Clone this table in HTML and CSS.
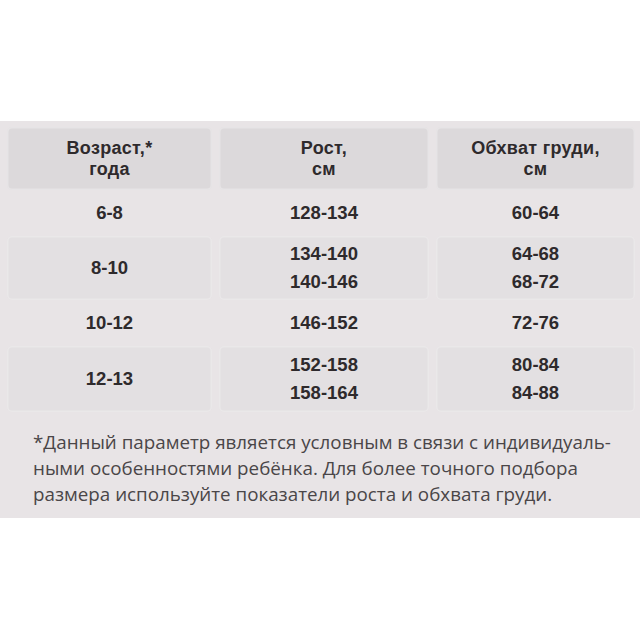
FILE: index.html
```html
<!DOCTYPE html>
<html lang="ru">
<head>
<meta charset="utf-8">
<link rel="stylesheet" href="styles.css">
</head>
<body>
<div class="top"></div>
<div class="card">
  <div class="table">
    <div class="cell head">Возраст,*<br>года</div>
    <div class="cell head">Рост,<br>см</div>
    <div class="cell head">Обхват груди,<br>см</div>

    <div class="cell">6-8</div>
    <div class="cell">128-134</div>
    <div class="cell">60-64</div>

    <div class="cell shade">8-10</div>
    <div class="cell shade">134-140<br>140-146</div>
    <div class="cell shade">64-68<br>68-72</div>

    <div class="cell">10-12</div>
    <div class="cell">146-152</div>
    <div class="cell">72-76</div>

    <div class="cell shade">12-13</div>
    <div class="cell shade">152-158<br>158-164</div>
    <div class="cell shade">80-84<br>84-88</div>
  </div>
  <p class="note">*Данный параметр является условным в связи с индивидуаль-<br>ными особенностями ребёнка. Для более точного подбора<br>размера используйте показатели роста и обхвата груди.</p>
</div>
</body>
</html>
```

FILE: styles.css
```css
html, body {
  margin: 0;
  padding: 0;
  background: #ffffff;
}
.top {
  height: 121px;
}
.card {
  height: 397px;
  background: #e8e4e6;
  padding-top: 6px;
  box-sizing: border-box;
  display: flex;
  flex-direction: column;
}
.table {
  display: grid;
  grid-template-columns: 205px 210px 199px;
  grid-template-rows: 63px 46px 64px 46px 66px;
  column-gap: 7px;
  padding-left: 7px;
}
.cell {
  display: flex;
  align-items: center;
  justify-content: center;
  text-align: center;
  font-family: "Liberation Sans", Arial, sans-serif;
  font-weight: bold;
  color: #2e2a2c;
  font-size: 18.5px;
  line-height: 28px;
}
.head {
  background: #dcd9db;
  font-size: 18px;
  line-height: 21px;
  letter-spacing: 0.3px;
  border-radius: 5px;
  box-shadow: inset 0 0 0 1.5px rgba(255,255,255,0.3);
}
.shade {
  background: #e3e0e2;
  box-shadow: inset 0 0 0 1.5px rgba(255,255,255,0.25);
  border-radius: 5px;
}
.note {
  margin: 17px 0 0 33px;
  font-family: "Open Sans", "Noto Sans", sans-serif;
  font-size: 18.8px;
  line-height: 26px;
  color: #4a4648;
  font-weight: 400;
}
```
